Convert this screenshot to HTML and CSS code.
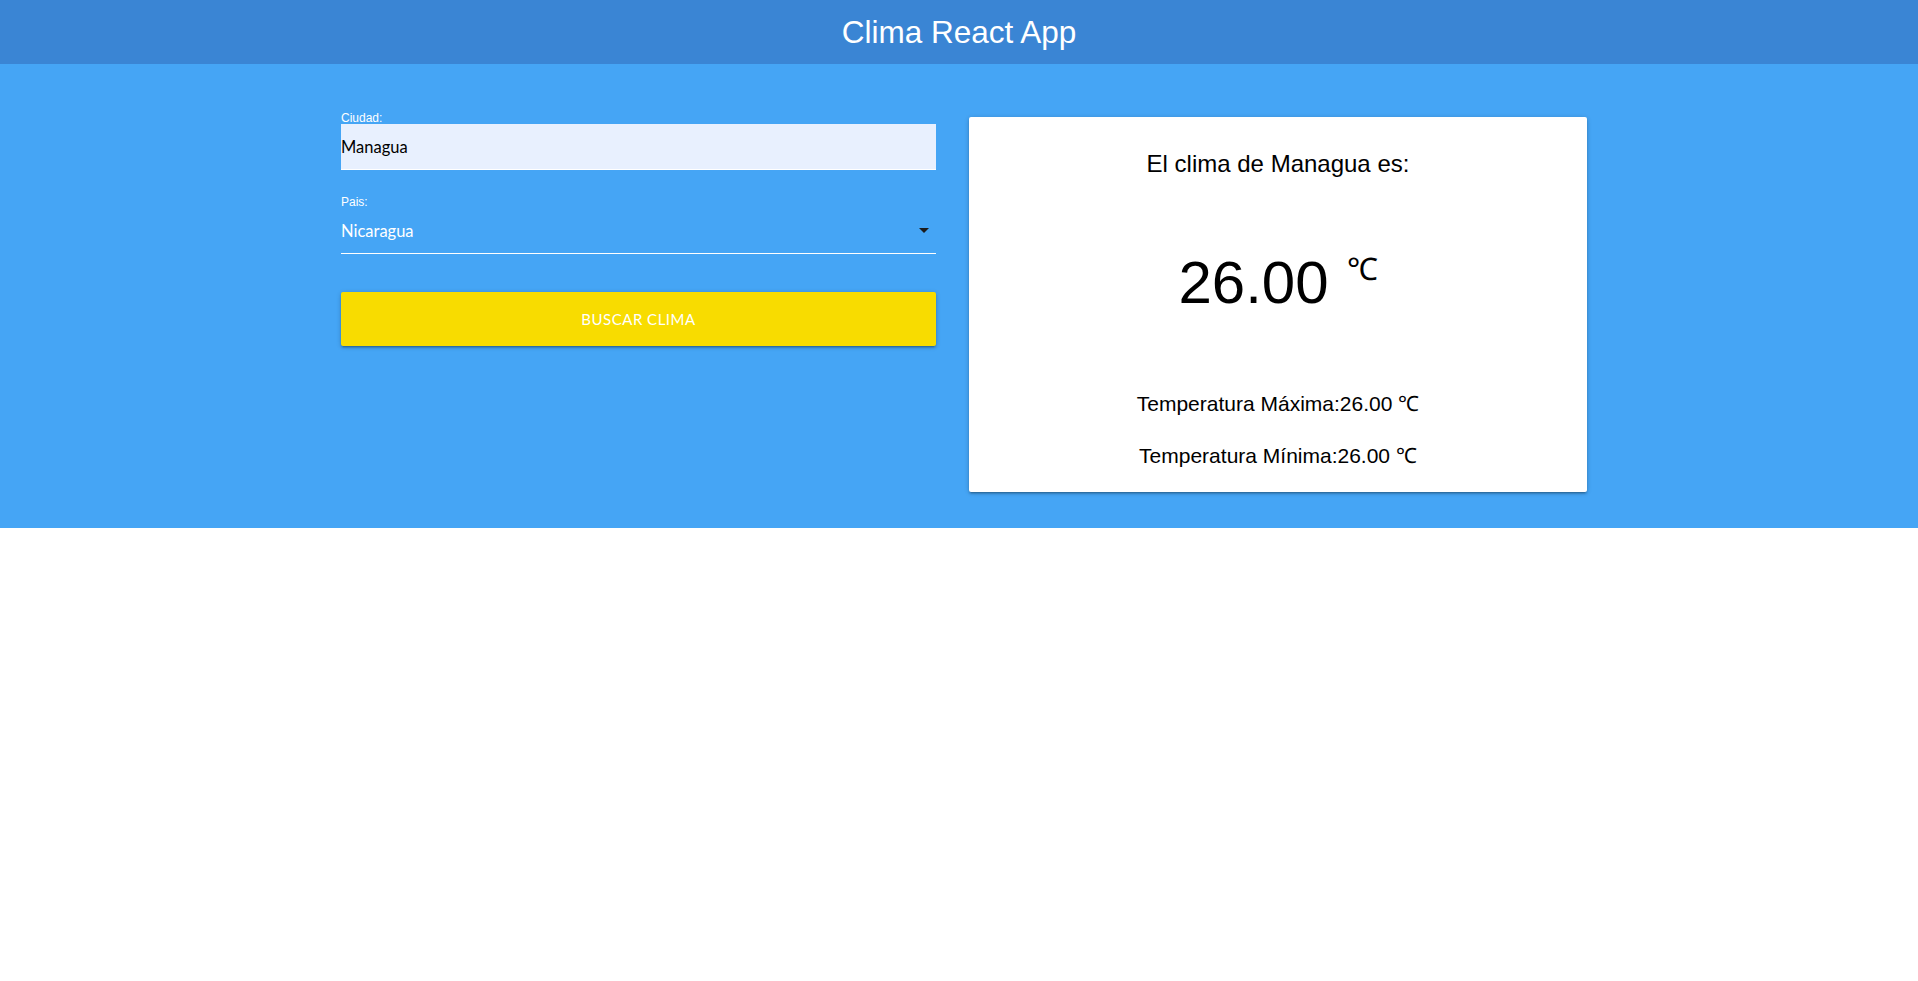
FILE: index.html
```html
<!DOCTYPE html>
<html lang="es">
<head>
<meta charset="utf-8">
<title>Clima React App</title>
<link rel="stylesheet" href="styles.css">
</head>
<body>
<nav class="nav">
  <span class="brand">Clima React App</span>
</nav>
<main class="main">
  <div class="container">
    <form class="form-col">
      <label class="field-label">Ciudad:</label>
      <div class="input-box">Managua</div>
      <label class="field-label second">Pais:</label>
      <div class="select-box">
        <span>Nicaragua</span>
        <span class="caret"></span>
      </div>
      <button type="button" class="btn">Buscar Clima</button>
    </form>
    <section class="card">
      <h2 class="card-title">El clima de Managua es:</h2>
      <p class="temp">26.00<span class="unit">&#x2103;</span></p>
      <p class="minmax first">Temperatura Máxima:26.00 &#x2103;</p>
      <p class="minmax">Temperatura Mínima:26.00 &#x2103;</p>
    </section>
  </div>
</main>
</body>
</html>
```
FILE: styles.css
```css
* { box-sizing: border-box; }
html, body { margin: 0; padding: 0; }
body {
  font-family: "Liberation Sans", Arial, sans-serif;
  background: #ffffff;
  color: #000;
}
.nav {
  height: 64px;
  background: #3a85d4;
  display: flex;
  justify-content: center;
}
.brand {
  color: #fff;
  font-size: 31.5px;
  line-height: 64px;
}
.main {
  background: #45a5f5;
  padding: 48px 0 36px 0;
}
.container {
  width: 1246px;
  margin-left: 341px;
  display: flex;
  align-items: flex-start;
  gap: 33px;
}
.form-col {
  width: 595px;
  display: flex;
  flex-direction: column;
  margin: 0;
}
.field-label {
  display: block;
  color: #fff;
  font-size: 12px;
  line-height: 13px;
  height: 12px;
}
.field-label.second { margin-top: 26px; }
.input-box {
  height: 46px;
  background: #e8f0fe;
  border-bottom: 1px solid #fff;
  font-family: Lato, "Noto Sans", sans-serif;
  font-size: 16.5px;
  line-height: 46px;
  color: #000;
}
.select-box {
  height: 46px;
  border-bottom: 1px solid #fff;
  display: flex;
  align-items: center;
  justify-content: space-between;
  font-family: Lato, "Noto Sans", sans-serif;
  font-size: 16.5px;
  color: #fff;
  padding-right: 7px;
}
.caret {
  width: 0;
  height: 0;
  border-left: 5px solid transparent;
  border-right: 5px solid transparent;
  border-top: 5px solid #1c1c1c;
}
.btn {
  margin-top: 38px;
  height: 54px;
  border: none;
  border-radius: 2px;
  background: #f8dc00;
  color: #fff;
  font-family: Lato, "Noto Sans", sans-serif;
  font-size: 15px;
  letter-spacing: 0.5px;
  text-transform: uppercase;
  box-shadow: 0 2px 2px 0 rgba(0,0,0,.14), 0 3px 1px -2px rgba(0,0,0,.12), 0 1px 5px 0 rgba(0,0,0,.2);
  cursor: pointer;
}
.card {
  width: 618px;
  margin-top: 5px;
  background: #fff;
  border-radius: 2px;
  box-shadow: 0 2px 2px 0 rgba(0,0,0,.14), 0 3px 1px -2px rgba(0,0,0,.12), 0 1px 5px 0 rgba(0,0,0,.2);
  padding: 33px 0 24px;
  text-align: center;
}
.card-title {
  margin: 0;
  font-weight: normal;
  font-size: 24px;
  line-height: 28px;
}
.temp {
  margin: 70px 0 0;
  font-size: 60px;
  line-height: 70px;
  display: flex;
  justify-content: center;
  align-items: flex-start;
}
.unit {
  font-size: 31px;
  line-height: 31px;
  margin-left: 18px;
  margin-top: 6px;
}
.minmax {
  margin: 28px 0 0;
  font-size: 21px;
  line-height: 24px;
}
.minmax.first { margin-top: 74px; }
```
